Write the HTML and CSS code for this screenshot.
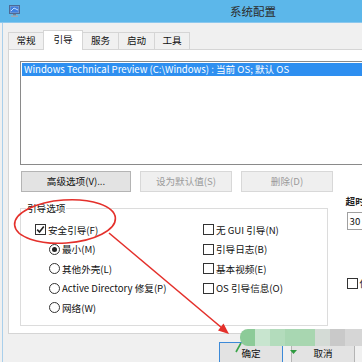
FILE: index.html
```html
<!DOCTYPE html>
<html lang="zh-CN">
<head>
<meta charset="utf-8">
<title>系统配置</title>
<link rel="stylesheet" href="styles.css">
</head>
<body>
<div class="window">
  <div class="titlebar">
    <svg class="app-icon" width="11" height="12" viewBox="0 0 11 12">
      <rect x="0.5" y="0.5" width="10" height="8" fill="#8aa4c8" stroke="#4d6a96"/>
      <rect x="1.5" y="1.5" width="8" height="6" fill="#3f7fe0"/>
      <path d="M2 6 L5 3 L9 5" stroke="#bfe0ff" fill="none"/>
      <rect x="4" y="9" width="3" height="1.5" fill="#6f7f94"/>
      <rect x="2" y="10.5" width="7" height="1.5" fill="#9aa8b8"/>
    </svg>
    <div class="title">系统配置</div>
  </div>
  <div class="client">
    <div class="tabs">
      <div class="tab t1">常规</div>
      <div class="tab t2 active">引导</div>
      <div class="tab t3">服务</div>
      <div class="tab t4">启动</div>
      <div class="tab t5">工具</div>
    </div>
    <div class="panel">
      <div class="listbox">
        <div class="row selected">Windows Technical Preview (C:\Windows) : 当前 OS; 默认 OS</div>
      </div>
      <div class="btnrow">
        <div class="btn b-adv">高级选项(V)...</div>
        <div class="btn b-def disabled">设为默认值(S)</div>
        <div class="btn b-del disabled">删除(D)</div>
      </div>
      <div class="lower">
        <fieldset class="group">
          <legend>引导选项</legend>
          <div class="grid">
            <div class="opt"><span class="cb checked"><svg width="9" height="9" viewBox="0 0 9 9"><path d="M1.2 4.6 L3.5 7 L7.8 1.6" stroke="#222" stroke-width="1.6" fill="none"/></svg></span>安全引导(F)</div>
            <div class="opt"><span class="cb"></span>无 GUI 引导(N)</div>
            <div class="opt sub"><span class="rb on"></span>最小(M)</div>
            <div class="opt"><span class="cb"></span>引导日志(B)</div>
            <div class="opt sub"><span class="rb"></span>其他外壳(L)</div>
            <div class="opt"><span class="cb"></span>基本视频(E)</div>
            <div class="opt sub"><span class="rb"></span>Active Directory 修复(P)</div>
            <div class="opt"><span class="cb"></span>OS 引导信息(O)</div>
            <div class="opt sub"><span class="rb"></span>网络(W)</div>
          </div>
        </fieldset>
        <div class="side">
          <div class="side-label">超时(T):</div>
          <div class="input">30</div>
          <div class="side-check"><span class="cb"></span>使所有引导设置成为永久设置(K)</div>
        </div>
      </div>
    </div>
    <div class="footer">
      <div class="btn fbtn default">确定</div>
      <div class="btn fbtn">取消</div>
    </div>
  </div>
</div>

<div class="mosaic">
  <span class="m1"></span><span class="m2"></span><span class="m3"></span><span class="m4"></span><span class="m5"></span><span class="m6"></span><span class="m7"></span><span class="m8"></span>
</div>

<svg class="annot" width="362" height="362" viewBox="0 0 362 362">
  <ellipse cx="65" cy="221.5" rx="50.5" ry="21.5" transform="rotate(-4 65 221.5)" fill="none" stroke="#e4302b" stroke-width="1.6"/>
  <line x1="109" y1="233" x2="222" y2="328" stroke="#e4302b" stroke-width="1.6"/>
  <polygon points="229,334 218,330.5 223.5,323.5" fill="#e4302b"/>
  <path d="M236 352 L241 343" stroke="#3aa54a" stroke-width="1.6"/>
  <polygon points="290,350 297,350 293.5,354" fill="#2e9b40"/>
</svg>
</body>
</html>
```

FILE: styles.css
```css
html, body {
  margin: 0;
  padding: 0;
  width: 362px;
  height: 362px;
  overflow: hidden;
  background: #f0f0f0;
}

body {
  font-family: "Noto Sans CJK SC", "Noto Sans", sans-serif;
  font-size: 9.6px;
  color: #111;
  position: relative;
}

.window {
  width: 506px;
}

.titlebar {
  height: 23px;
  background: #5cb7ea;
  display: flex;
  align-items: center;
  position: relative;
  border-bottom: 1px solid #8cc8ee;
  box-sizing: border-box;
}

.app-icon {
  margin-left: 9px;
}

.title {
  flex: 1;
  text-align: center;
  font-size: 11.5px;
  color: #2b2b2b;
  margin-right: 20px;
}

.client {
  margin-left: 2px;
  border-left: 1px solid #a9cfeb;
  padding-left: 5px;
  height: 339px;
}

.tabs {
  display: flex;
  align-items: flex-end;
  height: 26px;
  box-sizing: border-box;
  padding-top: 6px;
}

.tab {
  box-sizing: border-box;
  height: 17px;
  border: 1px solid #d5d5d5;
  border-bottom: none;
  background: #f0f0f0;
  text-align: center;
  line-height: 15px;
  margin-right: -1px;
}

.t1 { width: 36px; }
.t2 { width: 40px; }
.t3 { width: 37px; }
.t4 { width: 37px; }
.t5 { width: 36px; }

.tab.active {
  background: #fff;
  height: 20px;
  margin-bottom: -1px;
  position: relative;
  z-index: 1;
  line-height: 16px;
}

.panel {
  width: 490px;
  background: #fff;
  border: 1px solid #d5d5d5;
  box-sizing: border-box;
  padding: 11px 0 7px 11px;
}

.listbox {
  width: 470px;
  height: 104px;
  border: 1px solid #8a8a8a;
  box-sizing: border-box;
  padding: 1px;
  background: #fff;
}

.row {
  height: 13px;
  line-height: 13px;
  padding-left: 2px;
  white-space: nowrap;
}

.row.selected {
  background: #2e8ff0;
  color: #fff;
}

.btnrow {
  display: flex;
  gap: 9px;
  margin-top: 6px;
  padding-left: 1px;
}

.btn {
  box-sizing: border-box;
  height: 21px;
  line-height: 19px;
  border: 1px solid #b4b4b4;
  background: #e3e3e3;
  text-align: center;
  white-space: nowrap;
}

.b-adv { width: 110px; }
.b-def { width: 92px; }
.b-del { width: 92px; }

.btn.disabled {
  background: #efefef;
  border-color: #d8d8d8;
  color: #9a9a9a;
}

.lower {
  display: flex;
  gap: 18px;
  margin-top: 9px;
}

.group {
  width: 313px;
  box-sizing: border-box;
  margin: 0;
  border: 1px solid #dcdcdc;
  padding: 5px 0 7px 14px;
}

.group legend {
  padding: 0 1px;
  margin-left: -9px;
  line-height: 14px;
}

.grid {
  display: grid;
  grid-template-columns: 168px 1fr;
  grid-auto-rows: 19.5px;
}

.opt {
  display: flex;
  align-items: center;
  white-space: nowrap;
}

.opt.sub {
  padding-left: 14px;
}

.cb {
  box-sizing: border-box;
  width: 11px;
  height: 11px;
  border: 1px solid #333;
  background: #fff;
  margin-right: 2px;
  display: inline-flex;
  align-items: center;
  justify-content: center;
}

.rb {
  box-sizing: border-box;
  width: 11px;
  height: 11px;
  border: 1px solid #333;
  border-radius: 50%;
  background: #fff;
  margin-right: 2px;
  display: inline-flex;
  align-items: center;
  justify-content: center;
}

.rb.on::after {
  content: "";
  width: 5px;
  height: 5px;
  border-radius: 50%;
  background: #222;
}

.side {
  display: flex;
  flex-direction: column;
  margin-top: -7px;
}

.side-label {
  line-height: 14px;
  font-weight: bold;
  color: #222;
}

.input {
  margin-top: 4px;
  margin-left: 1px;
  width: 60px;
  height: 18px;
  box-sizing: border-box;
  border: 1px solid #a0a0a0;
  padding-left: 2px;
  line-height: 16px;
  background: #fff;
}

.side-check {
  margin-top: 46px;
  margin-left: 1px;
  display: flex;
  align-items: center;
  white-space: nowrap;
}

.footer {
  display: flex;
  gap: 8px;
  margin-top: 8px;
  padding-left: 211px;
}

.fbtn {
  width: 64px;
  height: 23px;
  line-height: 21px;
}

.fbtn.default {
  border-color: #3c8ad8;
}

.mosaic {
  position: absolute;
  left: 240px;
  top: 329px;
  display: flex;
  height: 17px;
}

.mosaic span {
  width: 15px;
  height: 17px;
}

.m1 { background: #8ccb98; border-radius: 8px 0 0 8px; }
.m2 { background: #c8e5cf; }
.m3 { background: #b3dcbc; }
.m4 { background: #a8d7b2; }
.m5 { background: #a8d6b0; }
.m6 { background: #d4dbd6; }
.m7 { background: #c9c9c9; }
.m8 { background: #d6d6d6; width: 17px !important; }

.annot {
  position: absolute;
  left: 0;
  top: 0;
  pointer-events: none;
}
```
